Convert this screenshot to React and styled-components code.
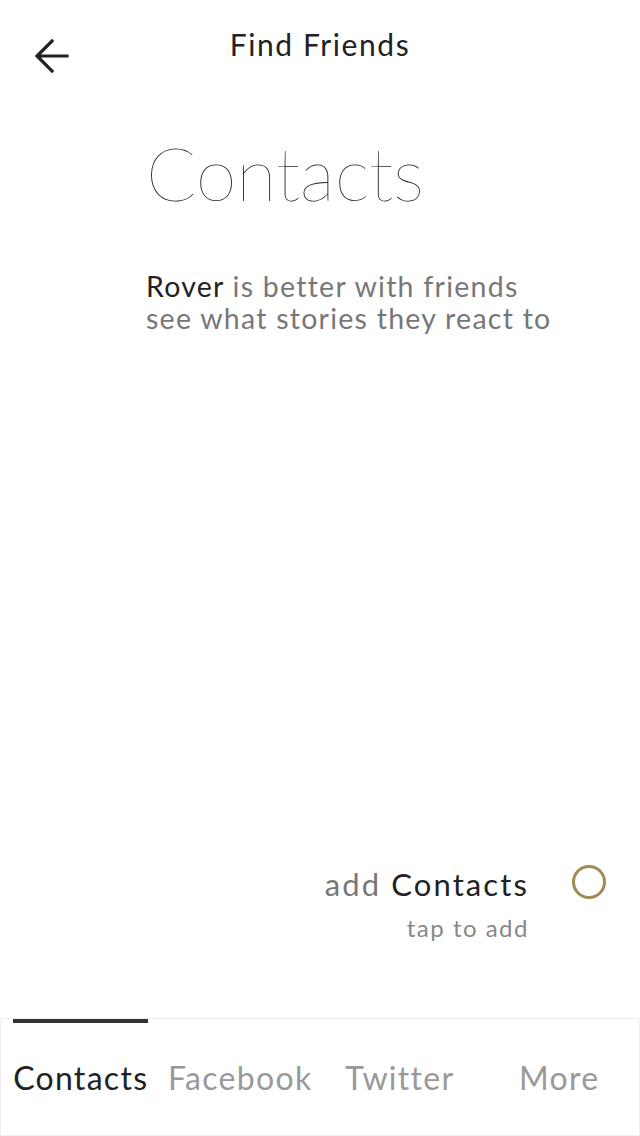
import React from "react"
import styled, { createGlobalStyle } from "styled-components"

const GlobalStyle = createGlobalStyle`
  html, body {
    margin: 0;
    padding: 0;
    background: #fff;
  }
  body {
    font-family: Lato, "Noto Sans", sans-serif;
    -webkit-font-smoothing: antialiased;
  }
`

const tabs = ["Contacts", "Facebook", "Twitter", "More"]

const App = () => (
  <Page>
    <GlobalStyle />
    <Header>
      <BackButton aria-label="back">
        <svg width="34" height="34" viewBox="0 0 34 34" fill="none">
          <path
            d="M32 17H3M17 2L2 17l15 15"
            stroke="#222"
            strokeWidth="3.2"
            strokeLinecap="square"
          />
        </svg>
      </BackButton>
      <HeaderTitle>Find Friends</HeaderTitle>
    </Header>

    <Intro>
      <Title>Contacts</Title>
      <Lead>
        <Strong>Rover</Strong> is better with friends
        <br />
        see what stories they react to
      </Lead>
    </Intro>

    <Spacer />

    <AddRow>
      <AddText>
        <AddLabel>
          add <Strong>Contacts</Strong>
        </AddLabel>
        <AddHint>tap to add</AddHint>
      </AddText>
      <Ring />
    </AddRow>

    <TabBar>
      {tabs.map((t, i) => (
        <Tab key={t}>
          <TabInner>
            <Indicator $active={i === 0} />
            <TabLabel $active={i === 0}>{t}</TabLabel>
          </TabInner>
        </Tab>
      ))}
    </TabBar>
  </Page>
)

export default App

const Page = styled.div`
  width: 640px;
  height: 1136px;
  display: flex;
  flex-direction: column;
  box-sizing: border-box;
`

const Header = styled.div`
  position: relative;
  height: 96px;
  display: flex;
  align-items: center;
  justify-content: center;
`

const BackButton = styled.button`
  position: absolute;
  left: 35px;
  top: 39px;
  border: 0;
  background: none;
  padding: 0;
  display: flex;
`

const HeaderTitle = styled.h1`
  margin: 0 0 4px;
  font-size: 30px;
  font-weight: 400;
  color: #222;
  letter-spacing: 1.6px;
  transform: translateY(-2px);
`

const Intro = styled.div`
  padding-left: 146px;
  padding-top: 32px;
`

const Title = styled.h2`
  margin: 0;
  font-size: 74px;
  line-height: 90px;
  font-weight: 100;
  color: #222;
  letter-spacing: -0.2px;
`

const Lead = styled.p`
  margin: 52px 0 0;
  font-size: 28.5px;
  line-height: 32px;
  color: #777;
  letter-spacing: 1.25px;
`

const Strong = styled.span`
  color: #222;
`

const Spacer = styled.div`
  flex: 1;
`

const AddRow = styled.div`
  display: flex;
  justify-content: flex-end;
  align-items: flex-start;
  padding-right: 34px;
  margin-bottom: 76px;
`

const AddText = styled.div`
  display: flex;
  flex-direction: column;
  align-items: flex-end;
  margin-right: 43px;
`

const AddLabel = styled.div`
  font-size: 31px;
  line-height: 36px;
  color: #777;
  letter-spacing: 2.1px;
`

const AddHint = styled.div`
  margin-top: 12px;
  font-size: 24px;
  line-height: 28px;
  color: #888;
  letter-spacing: 1.5px;
`

const Ring = styled.div`
  width: 28px;
  height: 28px;
  border: 3px solid #a08b57;
  border-radius: 50%;
  margin-top: -1px;
`

const TabBar = styled.div`
  height: 118px;
  display: flex;
  border: 1px solid #efefef;
  box-sizing: border-box;
`

const Tab = styled.div`
  width: 160px;
  display: flex;
  justify-content: center;
`

const TabInner = styled.div`
  display: inline-flex;
  flex-direction: column;
  align-items: stretch;
`

const Indicator = styled.div`
  height: 4px;
  background: ${p => (p.$active ? "#333" : "transparent")};
`

const TabLabel = styled.div`
  margin-top: 35px;
  font-size: 32px;
  line-height: 40px;
  color: ${p => (p.$active ? "#222" : "#999")};
  text-align: center;
  letter-spacing: 1.3px;
`
